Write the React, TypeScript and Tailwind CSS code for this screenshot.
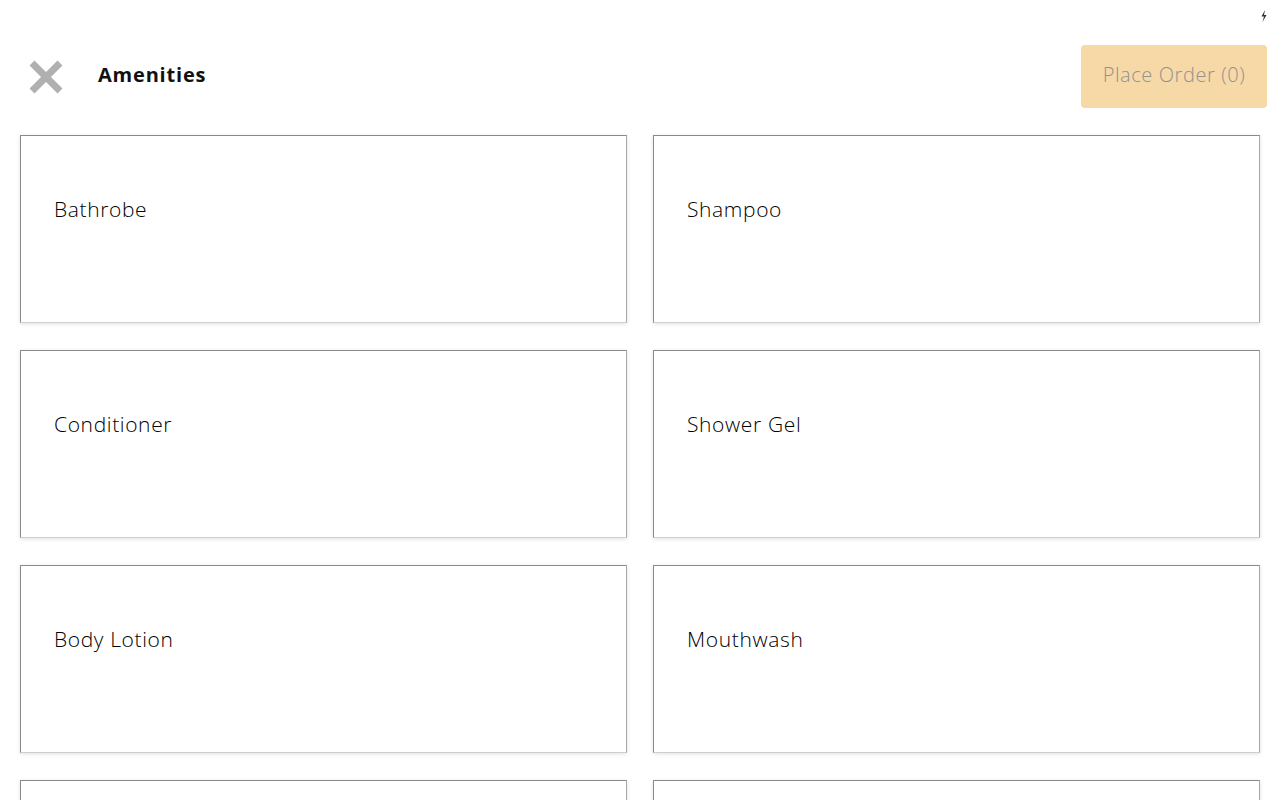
import React from "react";

const items = [
  "Bathrobe",
  "Shampoo",
  "Conditioner",
  "Shower Gel",
  "Body Lotion",
  "Mouthwash",
  "",
  "",
];

export default function App() {
  return (
    <div
      className="relative h-[800px] w-[1280px] overflow-hidden bg-white"
      style={{ fontFamily: '"Open Sans", "Liberation Sans", sans-serif' }}
    >
      <svg
        className="absolute right-[13px] top-[10px]"
        width="6"
        height="12"
        viewBox="0 0 6 12"
      >
        <path d="M4 0 L0.5 6.5 H3 L1.5 12 L5.5 5 H3 Z" fill="#333" />
      </svg>
      <div className="flex items-center justify-between pl-[28px] pr-[13px] pt-[45px]">
        <div className="flex items-center">
          <svg width="36" height="36" viewBox="0 0 36 36" className="blur-[0.5px]">
            <path
              d="M4 4 L32 32 M32 4 L4 32"
              stroke="#b0b0b0"
              strokeWidth="7"
              strokeLinecap="butt"
            />
          </svg>
          <span className="-mt-[3px] ml-[34px] text-[20px] font-bold tracking-[0.04em] text-[#111]">
            Amenities
          </span>
        </div>
        <button className="flex h-[63px] w-[186px] items-center justify-center rounded-[4px] bg-[#f6d9a6] pb-[4px] text-[20px] font-light tracking-[0.03em] text-[#929292]">
          Place Order (0)
        </button>
      </div>
      <div className="mt-[27px] grid grid-cols-2 gap-x-[26px] gap-y-[27px] pl-[20px] pr-[20px]">
        {items.map((it, i) => (
          <div
            key={i}
            className="h-[188px] border border-t-[#8a8a8a] border-l-[#8a8a8a] border-b-[#cfcfcf] border-r-[#a8a8a8] bg-white pl-[33px] pt-[58px] text-[21px] font-light tracking-[0.03em] text-[#000] shadow-[0_1px_4px_rgba(0,0,0,0.12)]"
          >
            {it}
          </div>
        ))}
      </div>
    </div>
  );
}
